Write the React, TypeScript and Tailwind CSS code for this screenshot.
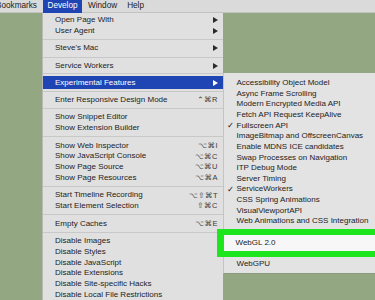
import React from 'react';

type Item = { label?: string; shortcut?: string; arrow?: boolean; sep?: string; active?: boolean };

const developItems: Item[] = [
  { label: 'Open Page With', arrow: true },
  { label: 'User Agent', arrow: true },
  { sep: 'h-[7.1px]' },
  { label: "Steve's Mac", arrow: true },
  { sep: 'h-[7.1px]' },
  { label: 'Service Workers', arrow: true },
  { sep: 'h-[4.6px]' },
  { label: 'Experimental Features', arrow: true, active: true },
  { sep: 'h-[5.2px]' },
  { label: 'Enter Responsive Design Mode', shortcut: '⌃⌘R' },
  { sep: 'h-[7.1px]' },
  { label: 'Show Snippet Editor' },
  { label: 'Show Extension Builder' },
  { sep: 'h-[7.1px]' },
  { label: 'Show Web Inspector', shortcut: '⌥⌘I' },
  { label: 'Show JavaScript Console', shortcut: '⌥⌘C' },
  { label: 'Show Page Source', shortcut: '⌥⌘U' },
  { label: 'Show Page Resources', shortcut: '⌥⌘A' },
  { sep: 'h-[7.1px]' },
  { label: 'Start Timeline Recording', shortcut: '⌥⇧⌘T' },
  { label: 'Start Element Selection', shortcut: '⇧⌘C' },
  { sep: 'h-[7.1px]' },
  { label: 'Empty Caches', shortcut: '⌥⌘E' },
  { sep: 'h-[7.1px]' },
  { label: 'Disable Images' },
  { label: 'Disable Styles' },
  { label: 'Disable JavaScript' },
  { label: 'Disable Extensions' },
  { label: 'Disable Site-specific Hacks' },
  { label: 'Disable Local File Restrictions' },
];

const features: { label: string; checked?: boolean }[] = [
  { label: 'Accessibility Object Model' },
  { label: 'Async Frame Scrolling' },
  { label: 'Modern Encrypted Media API' },
  { label: 'Fetch API Request KeepAlive' },
  { label: 'Fullscreen API', checked: true },
  { label: 'ImageBitmap and OffscreenCanvas' },
  { label: 'Enable MDNS ICE candidates' },
  { label: 'Swap Processes on Navigation' },
  { label: 'ITP Debug Mode' },
  { label: 'Server Timing' },
  { label: 'ServiceWorkers', checked: true },
  { label: 'CSS Spring Animations' },
  { label: 'VisualViewportAPI' },
  { label: 'Web Animations and CSS Integration' },
  { label: 'Web Authentication' },
  { label: 'WebGL 2.0' },
  { label: 'WebGL via Metal' },
  { label: 'WebGPU' },
];

const Arrow = ({ white }: { white?: boolean }) => (
  <svg width="5" height="6" viewBox="0 0 5 6" className="shrink-0">
    <polygon points="0,0 5,3 0,6" fill={white ? '#ffffff' : '#2a2a2a'} />
  </svg>
);

const App: React.FC = () => {
  return (
    <div className="relative w-[375px] h-[300px] overflow-hidden bg-[#93a783] font-['Liberation_Sans','DejaVu_Sans',sans-serif] text-[8px] text-[#222222]">
      {/* Menu bar */}
      <div className="flex h-[13px] items-center bg-[#dadada] border-b border-[#c2c2c2] text-[8.2px] whitespace-nowrap">
        <span className="ml-[-4px] w-[47px]">Bookmarks</span>
        <span className="flex h-[13px] w-[39px] items-center justify-center bg-[#1f44b4] text-white">Develop</span>
        <span className="ml-[6px]">Window</span>
        <span className="ml-[10px]">Help</span>
      </div>

      <div className="flex pl-[42px]">
        {/* Develop menu */}
        <div className="w-[181px] shrink-0 bg-[#e0e0e0] border-l border-[#b9b9b9] pt-[1.7px] h-[300px] whitespace-nowrap">
          {developItems.map((it, i) =>
            it.sep ? (
              <div key={i} className={`${it.sep} flex items-center`}>
                <div className="h-px w-full bg-[#c8c8c8]" />
              </div>
            ) : (
              <div
                key={i}
                className={`flex items-center justify-between pl-[12px] pr-[5px] ${
                  it.active ? 'h-[13px] bg-[#1f44b4] text-white' : 'h-[10.65px]'
                }`}
              >
                <span>{it.label}</span>
                {it.arrow && <Arrow white={it.active} />}
                {it.shortcut && <span className="text-[#3a3a3a] text-[7.5px] tracking-[0.5px]">{it.shortcut}</span>}
              </div>
            )
          )}
        </div>

        {/* Experimental Features submenu */}
        <div className="mt-[60px] w-[160px] shrink-0 self-start bg-[#e3e3e3] border-l border-[#c4c4c4] border-b border-b-[#8c9a80] pt-[4.7px] pb-[3.5px] whitespace-nowrap">
          {features.map((f) => (
            <div key={f.label} className="flex h-[10.65px] items-center">
              <span className="w-[12.5px] pl-[3px] text-[8.5px]">{f.checked ? '✓' : ''}</span>
              <span>{f.label}</span>
            </div>
          ))}
        </div>
      </div>

      {/* Highlight annotation */}
      <div className="absolute left-[217px] top-[229px] h-[28px] w-[170px] border-l-[7px] border-y-[6px] border-[#1ee61e] bg-[#f7f7f7]">
        <div className="flex h-full items-center pl-[11.5px] text-[8px]">WebGL 2.0</div>
      </div>
    </div>
  );
};

export default App;
